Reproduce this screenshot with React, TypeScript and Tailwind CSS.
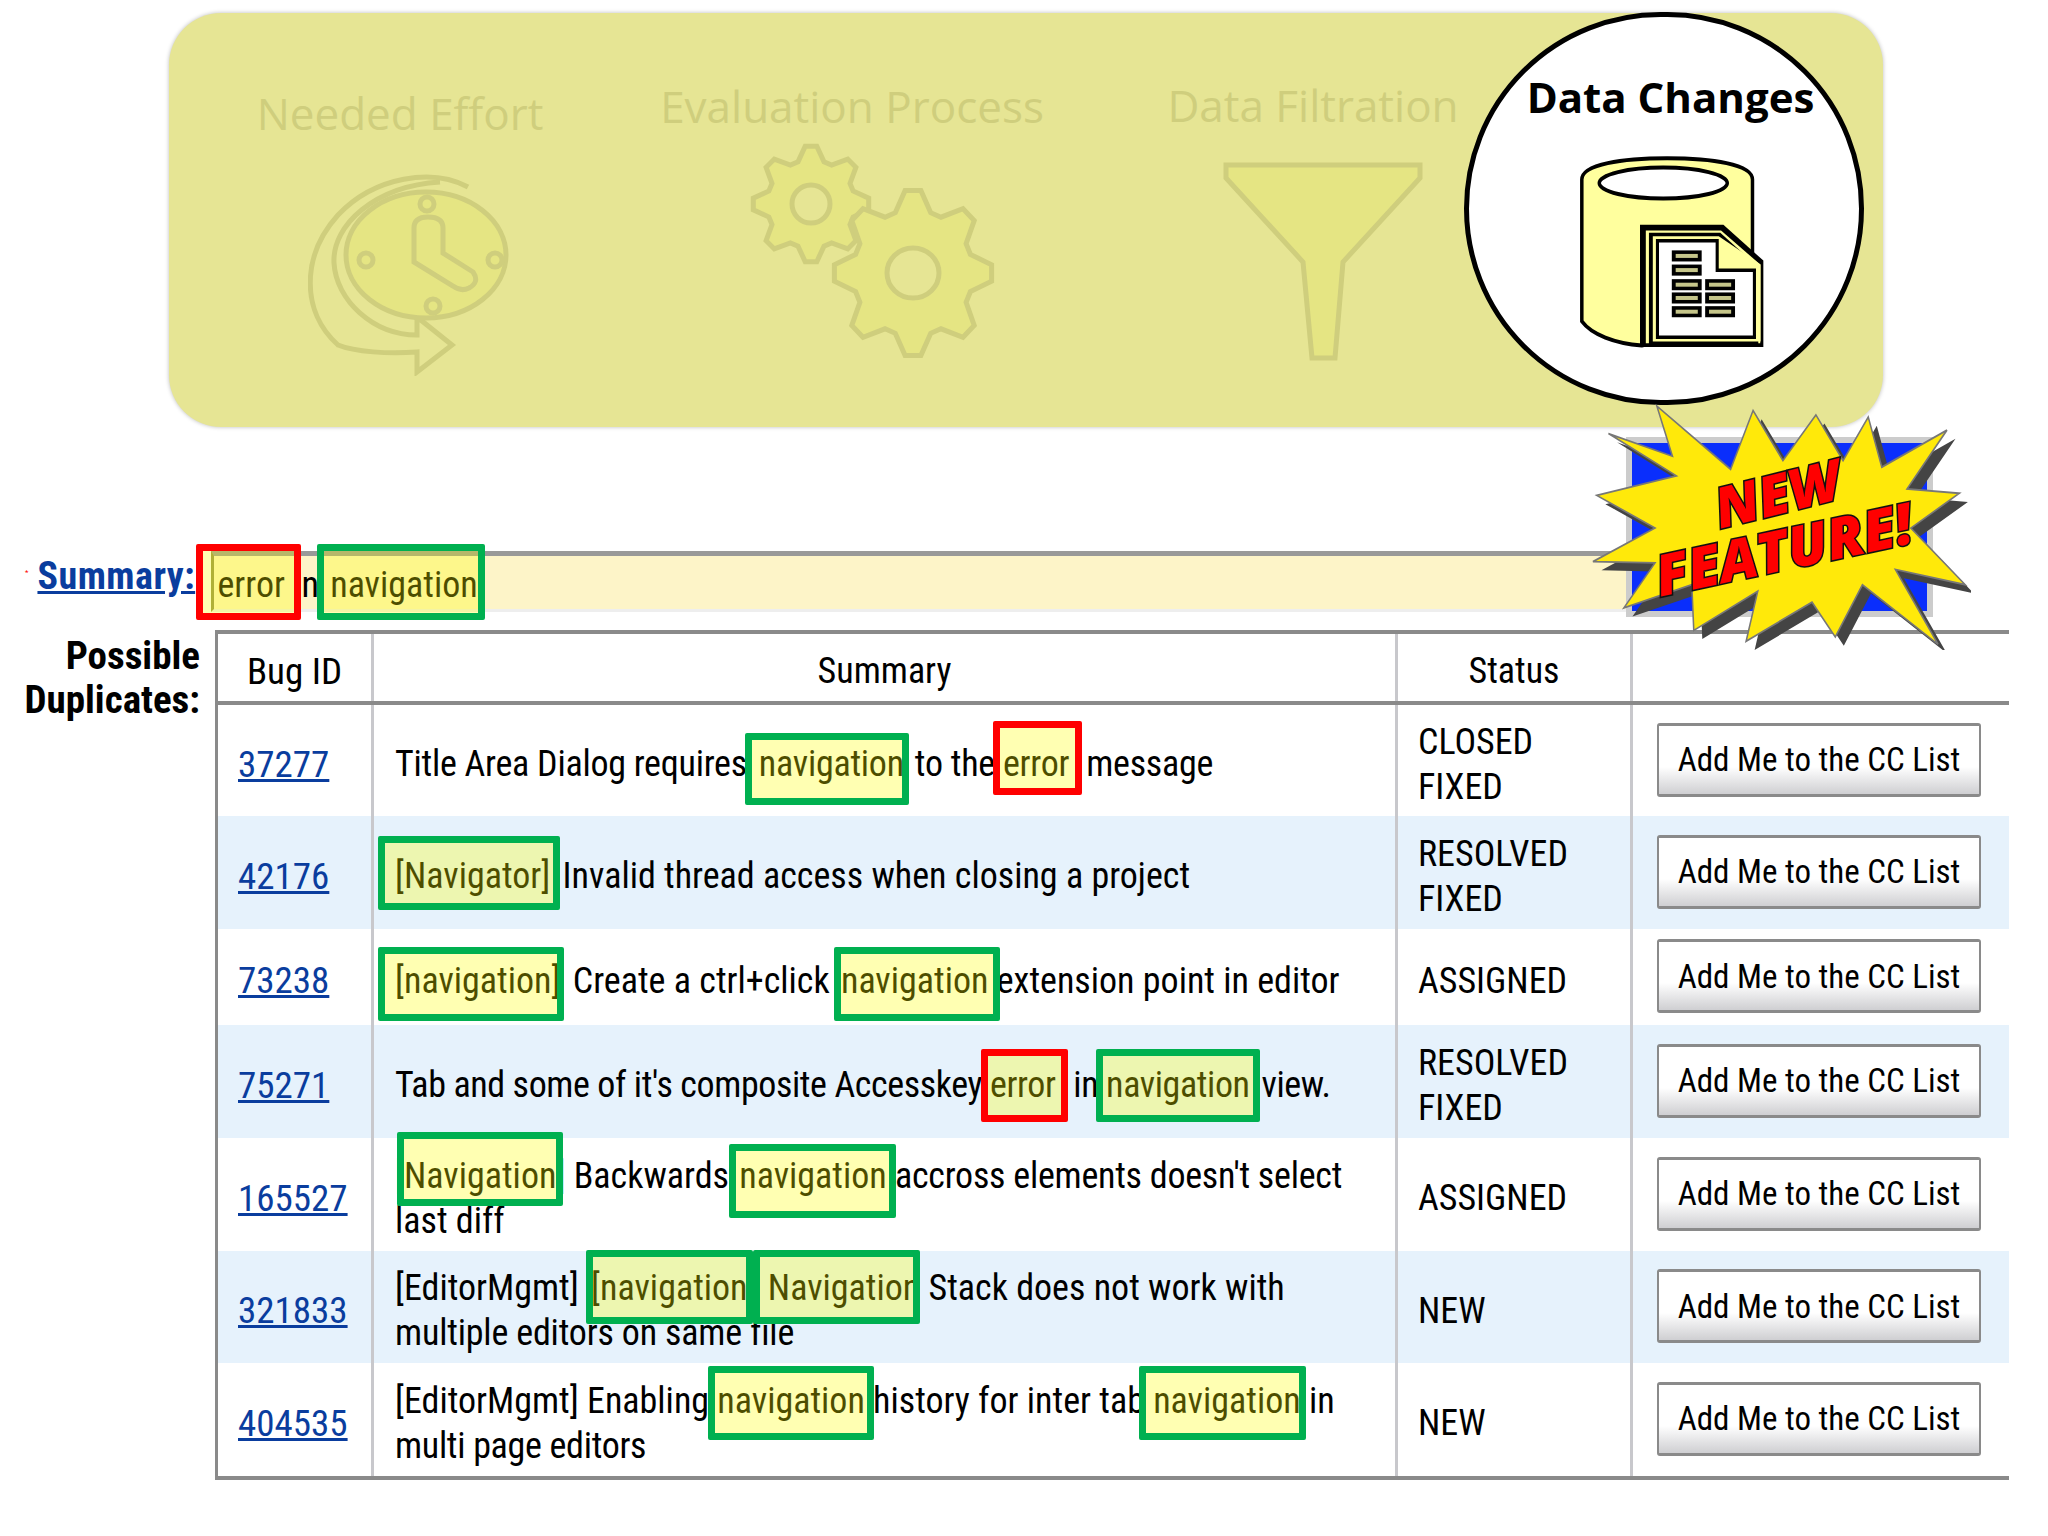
import type { ReactNode } from 'react'

const rows = [
  { id: '37277', h: 'h-[113px]', tint: false, status: ['CLOSED', 'FIXED'], summary: <span className="tracking-[-0.25px]">Title Area Dialog requires <Mark m="ml-[4px] mr-[3px]" box="-left-[14px] -right-[5px] -top-[10px] -bottom-[20px]">navigation</Mark> to the <Mark red m="mr-[9px]" box="-left-[10px] -right-[13px] -top-[22px] -bottom-[10px]">error</Mark> message</span> },
  { id: '42176', h: 'h-[113px]', tint: true, status: ['RESOLVED', 'FIXED'], summary: <><Mark m="mr-[4px]" box="-left-[17px] -right-[10px] -top-[19px] -bottom-[13px]">[Navigator]</Mark> Invalid thread access when closing a project</> },
  { id: '73238', h: 'h-[96px]', tint: false, status: ['ASSIGNED'], summary: <><Mark m="mr-[4px]" box="-left-[17px] -right-[3px] -top-[13px] -bottom-[19px]">[navigation]</Mark> Create a ctrl+click <Mark m="ml-[3px]" box="-left-[7px] -right-[12px] -top-[13px] -bottom-[19px]">navigation</Mark> extension point in editor</> },
  { id: '75271', h: 'h-[113px]', tint: true, status: ['RESOLVED', 'FIXED'], summary: <span className="tracking-[-0.4px]">Tab and some of it's composite Accesskey <Mark red m="mr-[10px]" box="-left-[9px] -right-[13px] -top-[15px] -bottom-[16px]">error</Mark> in <Mark m="mr-[4px]" box="-left-[10px] -right-[10px] -top-[15px] -bottom-[16px]">navigation</Mark> view.</span> },
  { id: '165527', h: 'h-[113px]', tint: false, status: ['ASSIGNED'], summary: <><Mark box="left-[2px] -right-[7px] -top-[23px] -bottom-[9px]">[Navigation</Mark>] Backwards <Mark m="ml-[2px]" box="-left-[10px] -right-[9px] -top-[11px] -bottom-[21px]">navigation</Mark> <span className="tracking-[-0.25px]">accross elements doesn't select</span><br />last diff</> },
  { id: '321833', h: 'h-[112px]', tint: true, status: ['NEW'], summary: <>[EditorMgmt] <Mark m="ml-[4px]" box="-left-[5px] right-[4px] -top-[17px] -bottom-[15px]">[navigation]</Mark> <Mark m="ml-[3px]" box="-left-[15px] right-0 -top-[17px] -bottom-[15px]">Navigation</Mark> Stack does not work with<br /><span className="tracking-[-0.18px]">multiple editors on same file</span></> },
  { id: '404535', h: 'h-[115px]', tint: false, status: ['NEW'], summary: <>[EditorMgmt] Enabling <Mark box="-left-[9px] -right-[9px] -top-[14px] -bottom-[18px]">navigation</Mark> history for inter tab <Mark box="-left-[14px] -right-[5px] -top-[14px] -bottom-[18px]">navigation</Mark> in<br /><span className="tracking-[-0.3px]">multi page editors</span></> },
]

function Mark({ children, box, red, m = '' }: { children: ReactNode; box: string; red?: boolean; m?: string }) {
  return (
    <span className={`relative ${m}`}>
      {children}
      <span className={`absolute ${box} rounded-[2px] border-[7px] bg-[#ffff00]/30 ${red ? 'border-[#ff0000]' : 'border-[#00b050]'}`} />
    </span>
  )
}

// 8 tooth gear outline around cx,cy
function gearPath(cx: number, cy: number, rx: number, ry: number) {
  const pts: string[] = []
  for (let i = 0; i < 8; i++) {
    const a = (i * Math.PI) / 4 - Math.PI / 2
    const steps: [number, number][] = [[-0.3, 0.76], [-0.1, 1], [0.1, 1], [0.3, 0.76]]
    for (const [da, r] of steps) {
      pts.push(`${(cx + Math.cos(a + da) * rx * r).toFixed(1)} ${(cy + Math.sin(a + da) * ry * r).toFixed(1)}`)
    }
  }
  return 'M' + pts.join(' L') + ' Z'
}

function ClockIcon() {
  return (
    <svg viewBox="305 172 202 204" className="h-[204px] w-[202px]" fill="none" stroke="#cfce7d" strokeWidth="5">
      <path d="M465 187 C430 168 372 176 335 215 C298 256 298 312 335 345 C352 352 385 354 414 352 L414 372 L449 345 L414 317 L414 335 C370 335 333 300 331 263 C329 225 372 186 437 182" />
      <ellipse cx="423" cy="255" rx="80" ry="63" fill="#e5e583" />
      <circle cx="424" cy="204" r="7" />
      <circle cx="430" cy="306" r="7" />
      <circle cx="363" cy="260" r="7" />
      <circle cx="492" cy="260" r="7" />
      <path d="M411 228 Q411 217 425 217 Q440 217 440 228 L440 253 L470 272 Q477 282 466 288 Q458 292 450 286 L411 262 Z" />
    </svg>
  )
}

function GearsIcon() {
  return (
    <svg viewBox="748 142 246 218" className="h-[218px] w-[246px]" fill="#e5e583" stroke="#cfce7d" strokeWidth="5">
      <path d={gearPath(810, 204, 58, 58)} />
      <ellipse cx="810" cy="204" rx="19" ry="19" fill="#e6e594" />
      <path d={gearPath(912, 273, 79, 83)} />
      <ellipse cx="912" cy="273" rx="26" ry="25" fill="#e6e594" />
    </svg>
  )
}

function FunnelIcon() {
  return (
    <svg viewBox="0 0 200 200" className="h-[200px] w-[200px]" fill="#e5e583" stroke="#cfce7d" strokeWidth="5">
      <path d="M3 3 H197 V16 L120 100 L112 196 H89 L80 100 L3 16 Z" />
    </svg>
  )
}

function DatabaseIcon() {
  const bars = [
    [597, 580], [597, 612], [597, 645], [597, 675], [597, 706],
    [683, 645], [683, 675], [683, 706],
  ]
  return (
    <svg viewBox="350 360 495 445" preserveAspectRatio="none" className="h-[197px] w-[192px]">
      <path d="M365 420 C365 385 470 372 585 372 C700 372 805 385 805 420 L805 740 L520 795 C450 790 390 770 365 740 Z" fill="#ffff9e" stroke="#000" strokeWidth="9" />
      <ellipse cx="575" cy="428" rx="165" ry="35" fill="#fff" stroke="#000" strokeWidth="9" />
      <path d="M515 522 H730 L833 603 V798 H515 Z" fill="#000" />
      <path d="M530 535 H724 L825 612 V790 H530 Z" fill="#ffff9e" />
      <path d="M538 540 H722 L820 618 V798 H538 Z" fill="#000" />
      <path d="M548 548 H718 L826 612 V786 H548 Z" fill="#ffff9e" />
      <path d="M560 558 H714 V625 H810 V776 H560 Z" fill="#fff" stroke="#000" strokeWidth="8" />
      {bars.map(([x, y]) => (
        <g key={`${x}-${y}`}>
          <rect x={x} y={y} width="77" height="25" fill="#000" />
          <rect x={x + 10} y={y + 8} width="57" height="9" fill="#c5c58a" />
        </g>
      ))}
    </svg>
  )
}

function StarBurst() {
  const star = '560,935 750,1080 808,945 885,1060 970,955 1040,1060 1105,960 1140,1075 1308,990 1205,1125 1340,1135 1215,1215 1355,1345 1175,1310 1285,1482 1090,1345 1020,1465 960,1385 790,1475 820,1360 655,1450 650,1345 475,1398 555,1295 395,1292 555,1215 405,1140 610,1095 435,998 600,1050'
  return (
    <svg viewBox="390 930 980 565" preserveAspectRatio="none" className="absolute inset-0 h-full w-full">
      <polygon points={star} fill="#444" transform="translate(22 20)" />
      <polygon points={star} fill="#ffe90a" stroke="#777" strokeWidth="4" />
    </svg>
  )
}

export default function App() {
  return (
    <div className="relative h-[1536px] w-[2048px] overflow-hidden bg-white font-['Roboto',sans-serif] text-[36px] leading-[45px] text-black [font-stretch:75%]">
      <div className="relative ml-[169px] mt-[13px] h-[414px] w-[1714px] rounded-[52px] bg-[#e6e594] text-[#cfce7d] shadow-[0_0_4px_#bbb] [font-stretch:100%]">
        <div className="flex font-['Open_Sans',sans-serif] text-[44px]">
          <div className="ml-[86px] mt-[75px] flex w-[290px] flex-col items-center">
            <div className="whitespace-nowrap leading-[50px]">Needed Effort</div>
            <div className="ml-[18px] mt-[34px]"><ClockIcon /></div>
          </div>
          <div className="ml-[117px] mt-[68px] flex w-[380px] flex-col items-center">
            <div className="whitespace-nowrap leading-[50px]">Evaluation Process</div>
            <div className="ml-[40px] mt-[11px]"><GearsIcon /></div>
          </div>
          <div className="ml-[124px] mt-[67px] flex w-[294px] flex-col items-center">
            <div className="whitespace-nowrap leading-[50px]">Data Filtration</div>
            <div className="ml-[20px] mt-[32px]"><FunnelIcon /></div>
          </div>
        </div>
        <div className="absolute left-[1295px] -top-[1px] flex h-[393px] w-[400px] flex-col items-center rounded-full border-[5px] border-black bg-white">
          <div className="ml-[13px] mt-[55px] font-['Open_Sans',sans-serif] text-[42px] font-bold leading-[50px] text-black">Data Changes</div>
          <div className="ml-[16px] mt-[31px]"><DatabaseIcon /></div>
        </div>
      </div>

      <div className="ml-[25px] mt-[10px] flex h-[180px] items-end">
        <span className="mb-[40px] text-[8px] leading-none text-[#ff0000]">*</span>
        <a className="mb-[18px] ml-[9px] w-[174px] text-[38px] font-bold tracking-[0.5px] text-[#0a3d9e] underline">Summary:</a>
        <div className="mb-[5px] flex h-[61px] w-[1415px] items-center border-b-[3px] border-l-[3px] border-t-[5px] border-b-[#eeeeee] border-l-[#8f8f50] border-t-[#999999] bg-[#fdf4c8] pl-[3px] pt-[5px]">
          <span><Mark red box="-left-[21px] -right-[16px] -top-[20px] -bottom-[14px]">error</Mark> in <span className="ml-[3px]"><Mark box="-left-[13px] -right-[7px] -top-[20px] -bottom-[14px]">navigation</Mark></span></span>
        </div>
        <div className="h-[180px] w-[307px] border-[6px] border-[#cccccc] bg-[#0a2efc]" />
      </div>

      <div className="mt-[13px] flex items-start">
        <div className="w-[215px] pr-[15px] pt-[4px] text-right text-[39px] font-bold leading-[44px]">
          <div>Possible</div>
          <div>Duplicates:</div>
        </div>
        <table className="w-[1792px] table-fixed border-collapse border-b-[4px] border-t-[4px] border-[#8a8a8a]">
          <colgroup>
            <col className="w-[156px]" />
            <col className="w-[1024px]" />
            <col className="w-[235px]" />
            <col className="w-[377px]" />
          </colgroup>
          <thead>
            <tr className="h-[71px] border-b-[4px] border-[#8a8a8a] font-normal">
              <th className="border-l-[3px] border-[#8a8a8a] pt-[8px] text-[37px] font-normal">Bug ID</th>
              <th className="border-l-[3px] border-[#c8c8cc] pt-[8px] font-normal">Summary</th>
              <th className="border-l-[3px] border-[#c8c8cc] pt-[8px] font-normal">Status</th>
              <th className="border-l-[3px] border-[#c8c8cc] font-normal" />
            </tr>
          </thead>
          <tbody>
            {rows.map((row) => (
              <tr key={row.id} className={`${row.h} ${row.tint ? 'bg-[#e6f2fc]' : 'bg-white'}`}>
                <td className="border-l-[3px] border-[#8a8a8a] pl-[20px] pt-[8px]">
                  <a className="text-[37px] text-[#0a3d9e] underline">{row.id}</a>
                </td>
                <td className="border-l-[3px] border-[#c8c8cc] pl-[21px] pt-[8px]">{row.summary}</td>
                <td className="border-l-[3px] border-[#c8c8cc] pl-[20px] pt-[8px]">
                  {row.status.map((s) => (
                    <div key={s}>{s}</div>
                  ))}
                </td>
                <td className="border-l-[3px] border-[#c8c8cc] pb-[2px] pl-[24px]">
                  <button className="h-[74px] w-[324px] whitespace-nowrap rounded-[3px] border-[2px] border-b-[3px] border-t-[3px] border-[#8a8a8a] bg-gradient-to-b from-white from-60% to-[#cfcfd2] text-[33px]">
                    Add Me to the CC List
                  </button>
                </td>
              </tr>
            ))}
          </tbody>
        </table>
      </div>

      <div className="absolute left-[1591px] top-[404px] h-[246px] w-[380px] [font-stretch:100%]">
        <StarBurst />
        <span className="absolute left-[122px] top-[60px] -rotate-[14deg] whitespace-nowrap font-['Open_Sans',sans-serif] text-[56px] font-extrabold italic leading-none text-[#ff0000] [-webkit-text-stroke:3px_#111] [paint-order:stroke_fill]">NEW</span>
        <span className="absolute left-[62px] top-[116px] -rotate-[12deg] whitespace-nowrap font-['Open_Sans',sans-serif] text-[57px] font-extrabold italic leading-none text-[#ff0000] [-webkit-text-stroke:3px_#111] [paint-order:stroke_fill]">FEATURE!</span>
      </div>
    </div>
  )
}
